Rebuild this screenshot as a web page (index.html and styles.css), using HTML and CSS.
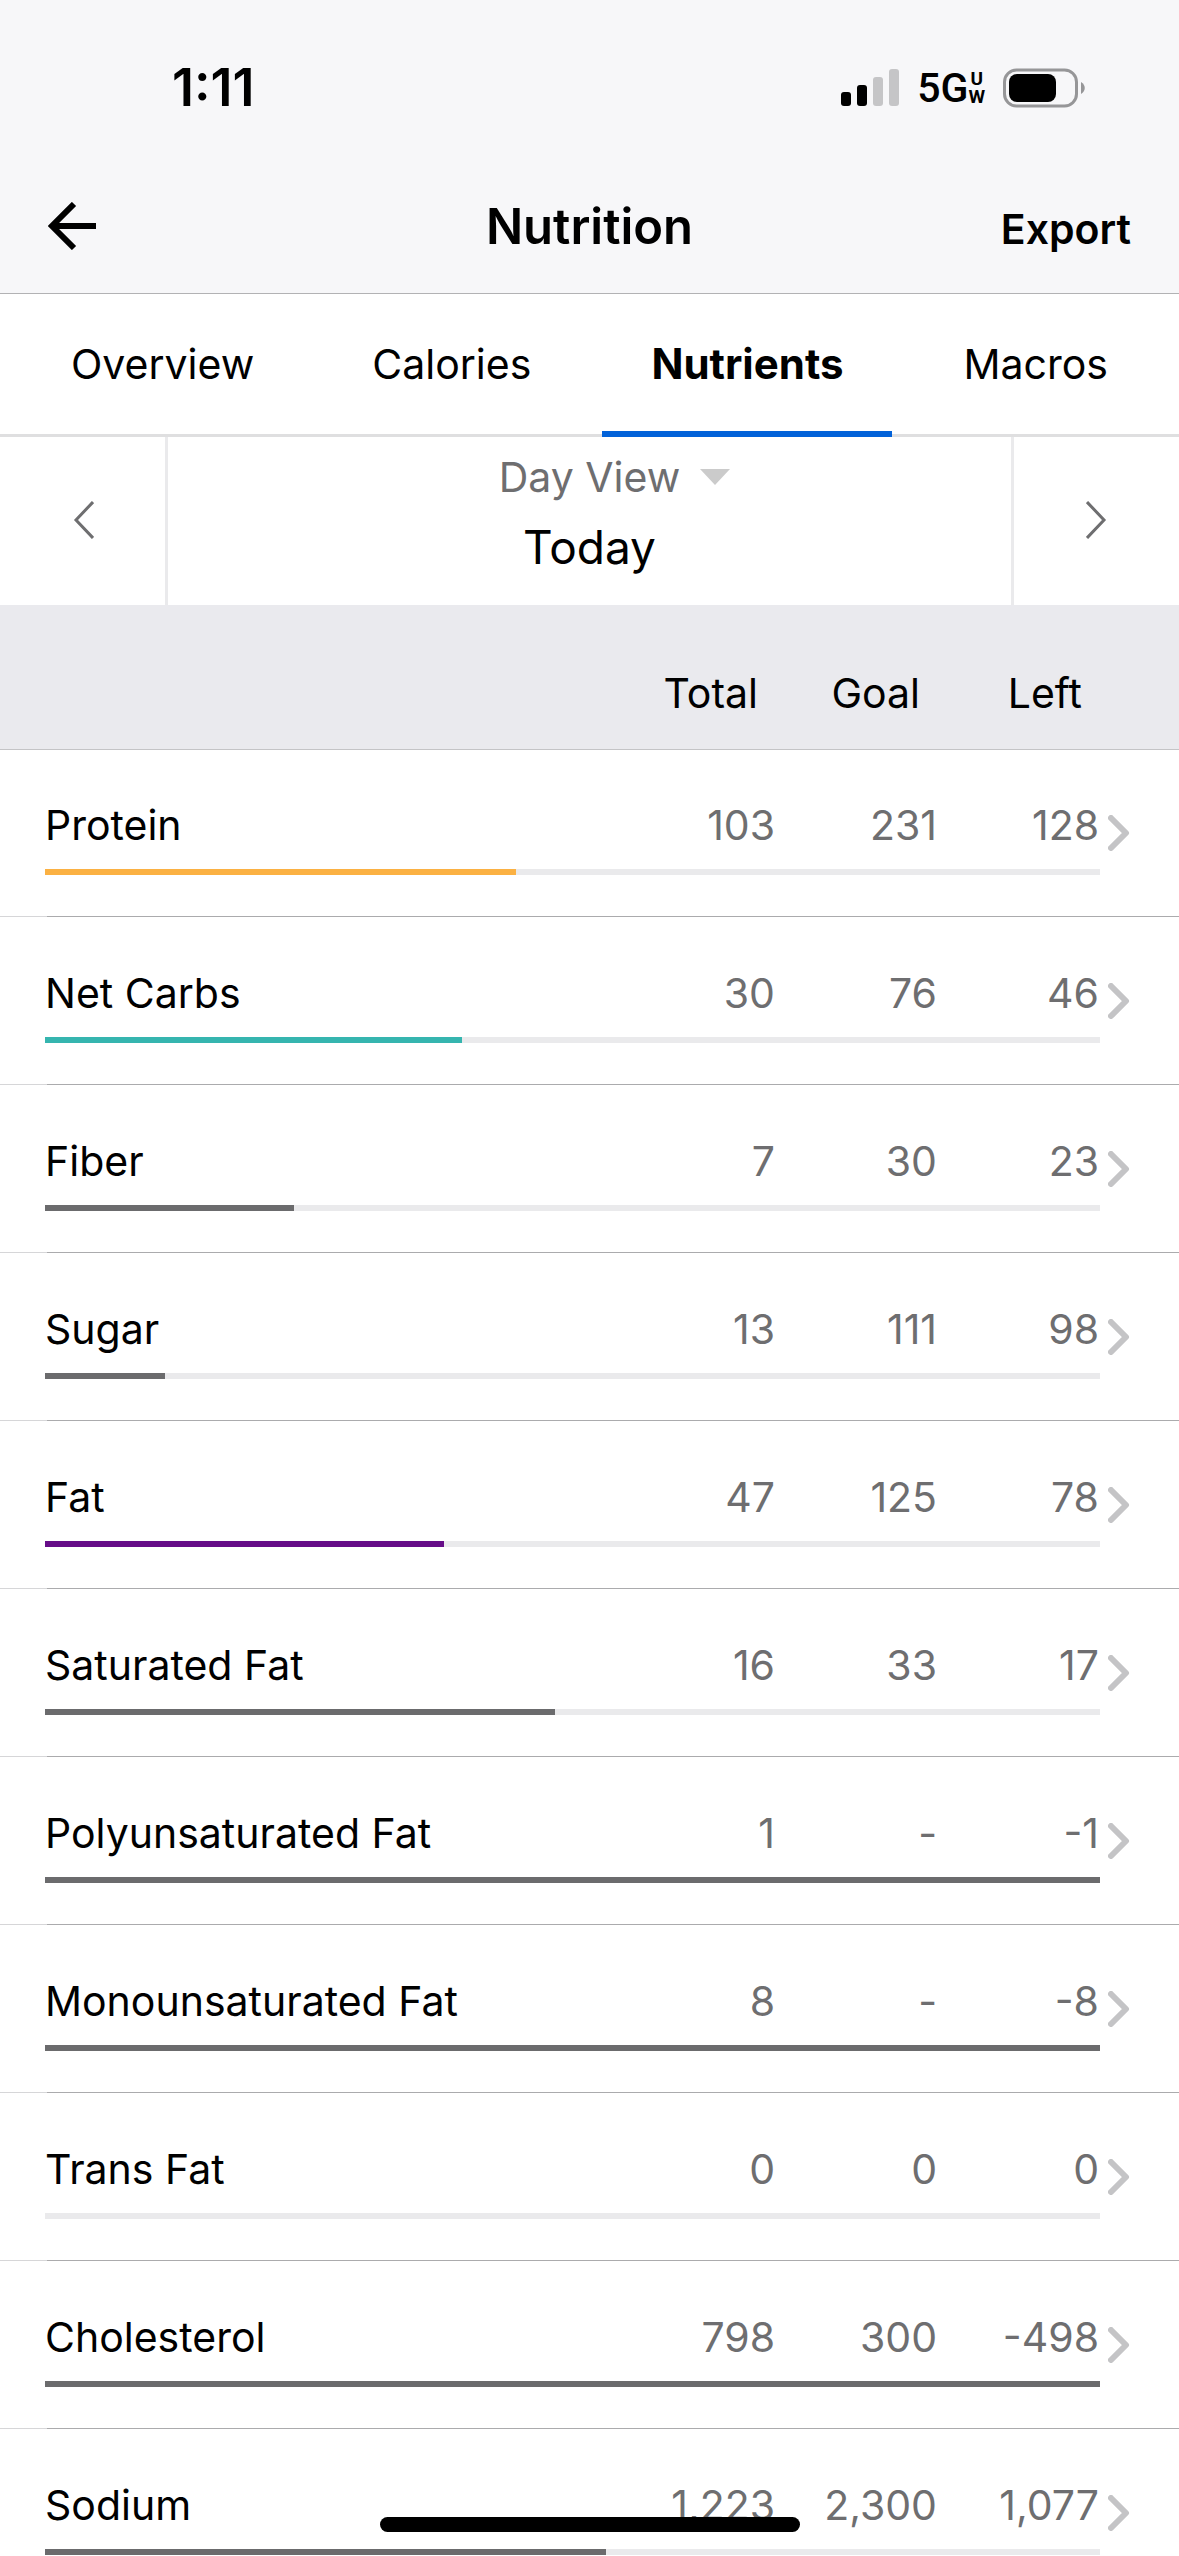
FILE: index.html
```html
<!DOCTYPE html>
<html lang="en">
<head>
    <meta charset="UTF-8">
    <meta name="viewport" content="width=device-width, initial-scale=1.0">
    <title>Nutrition</title>
    <link rel="stylesheet" href="styles.css">
</head>
<body>
    <div class="app">
        <div class="status-bar">
            <span class="time">1:11</span>
            <div class="status-icons">
                <svg class="signal" width="58" height="38" viewBox="0 0 58 38">
                    <rect x="0" y="23" width="10" height="14" rx="3"/>
                    <rect x="16" y="16" width="10" height="21" rx="3"/>
                    <rect x="32" y="8" width="10" height="29" rx="3" fill="#c5c5c7"/>
                    <rect x="48" y="0" width="10" height="37" rx="3" fill="#c5c5c7"/>
                </svg>
                <span class="network">5G<span class="network-uw"><span>U</span><span>W</span></span></span>
                <svg class="battery" width="82" height="40" viewBox="0 0 82 40">
                    <rect x="1.5" y="2" width="72" height="36" rx="12" fill="none" stroke="#969698" stroke-width="3"/>
                    <rect x="6" y="6" width="47" height="28" rx="8"/>
                    <path d="M78 14 C83 17 83 23 78 26 Z" fill="#969698"/>
                </svg>
            </div>
        </div>

        <header class="nav-bar">
            <button class="back" type="button" aria-label="Back">
                <svg width="48" height="48" viewBox="0 0 48 48" fill="none" stroke="#000" stroke-width="6">
                    <path d="M48 24 H5"/>
                    <path d="M26 2 L4 24 L26 46"/>
                </svg>
            </button>
            <h1>Nutrition</h1>
            <button class="export" type="button">Export</button>
        </header>

        <nav class="tabs">
            <a href="#overview">Overview</a>
            <a href="#calories">Calories</a>
            <a class="active" href="#nutrients">Nutrients</a>
            <a href="#macros">Macros</a>
        </nav>

        <div class="date-bar">
            <button class="prev" type="button" aria-label="Previous day">
                <svg width="22" height="38" viewBox="0 0 22 38" fill="none" stroke="#6e6e70" stroke-width="3">
                    <path d="M21 1 L4 19 L21 37"/>
                </svg>
            </button>
            <div class="date">
                <button class="view" type="button">Day View
                    <svg width="30" height="16" viewBox="0 0 30 16"><path d="M0 0 H30 L15 16 Z" fill="#cbcbcb"/></svg>
                </button>
                <span class="today">Today</span>
            </div>
            <button class="next" type="button" aria-label="Next day">
                <svg width="22" height="38" viewBox="0 0 22 38" fill="none" stroke="#6e6e70" stroke-width="3">
                    <path d="M1 1 L18 19 L1 37"/>
                </svg>
            </button>
        </div>

        <table class="nutrients">
            <thead>
                <tr><th></th><th>Total</th><th>Goal</th><th>Left</th></tr>
            </thead>
            <tbody></tbody>
        </table>

        <div class="home-indicator"></div>
    </div>
    <script src="script.js"></script>
</body>
</html>
```
FILE: styles.css
```css
* {
    box-sizing: border-box;
}
body {
    margin: 0;
    background-color: #fff;
    color: #000;
    font-family: Inter, "Liberation Sans", sans-serif;
    font-size: 41px;
    line-height: 50px;
}
button {
    padding: 0;
    border: 0;
    background: none;
    color: inherit;
    font: inherit;
}
svg {
    display: block;
    flex: none;
}
.app {
    height: 100vh;
    overflow: hidden;
}

/* status bar */
.status-bar {
    display: flex;
    justify-content: space-between;
    align-items: center;
    height: 176px;
    padding: 0 94px 0 172px;
    background-color: #f7f7f9;
}
.time {
    font-size: 52px;
    font-weight: 600;
}
.status-icons {
    display: flex;
    align-items: center;
    gap: 18px;
}
.network {
    display: flex;
    align-items: center;
    font-family: Roboto, sans-serif;
    font-size: 41px;
    font-weight: 500;
}
.network-uw {
    display: flex;
    flex-direction: column;
    align-items: center;
    font-size: 19px;
    font-weight: 700;
    line-height: 18px;
}

/* title */
.nav-bar {
    display: grid;
    grid-template-columns: 1fr auto 1fr;
    align-items: baseline;
    height: 118px;
    padding: 26px 48px 0;
    background-color: #f7f7f9;
    border-bottom: 1px solid #b2b2b4;
}
.back {
    align-self: start;
    justify-self: start;
}
h1 {
    margin: 0;
    font-size: 49px;
    font-weight: 600;
}
.export {
    justify-self: end;
    font-weight: 600;
}

/* tabs */
.tabs {
    display: flex;
    justify-content: space-between;
    height: 143px;
    padding: 0 24px;
    box-shadow: inset 0 -3px #dfdfe0;
}
.tabs a {
    padding: 45px 47px 0;
    color: #000;
    text-decoration: none;
}
.tabs .active {
    font-size: 42px;
    font-weight: 700;
    padding: 45px 49px 0;
    border-bottom: 6px solid #0262d9;
}

/* day picker */
.date-bar {
    display: flex;
    height: 168px;
}
.prev, .next {
    display: flex;
    align-items: center;
    justify-content: center;
    width: 168px;
    padding-bottom: 2px;
}
.prev {
    border-right: 3px solid #eaeaec;
}
.next {
    border-left: 3px solid #eaeaec;
}
.date {
    display: flex;
    flex: 1;
    flex-direction: column;
    align-items: center;
    padding-top: 15px;
    gap: 20px;
}
.view {
    display: flex;
    align-items: center;
    gap: 20px;
    padding-left: 50px;
    color: #6e6e70;
}
.today {
    font-size: 46px;
}

/* table */
.nutrients, .nutrients thead, .nutrients tbody {
    display: block;
}
.nutrients th, .nutrients td {
    padding: 0;
    font-weight: 400;
}
.nutrients tr {
    display: grid;
    grid-template-columns: 1fr 162px 162px 162px;
    text-align: right;
}
.nutrients thead tr {
    height: 144px;
    padding: 63px 97px 0 45px;
    background-color: #eaeaee;
}
.nutrients tbody {
    border-top: 1px solid #c4c4c6;
}
.nutrients tbody tr {
    grid-template-columns: 1fr 162px 162px 162px 30px;
    grid-template-rows: 50px 6px;
    row-gap: 19px;
    height: 168px;
    padding: 51px 49px 0 45px;
    border-bottom: 1px solid #ababad;
    border-image: linear-gradient(to right, #d6d6d8 48px, #ababad 48px) 1;
}
.nutrients tbody tr:first-child {
    height: 167px;
    padding-top: 50px;
}
.nutrients tbody th {
    text-align: left;
    white-space: nowrap;
}
.nutrients td {
    padding-right: 1px;
    color: #6e6e70;
}
.nutrients .chevron {
    grid-column: 5;
    grid-row: 1;
    padding: 15px 0 0 8px;
}
.nutrients .bar {
    grid-column: 1 / 5;
    grid-row: 2;
    padding: 0;
    background-color: #eaeaec;
}
.fill {
    height: 6px;
    background-color: #6b6b6d;
}
.fill.orange {
    background-color: #fbb143;
}
.fill.teal {
    background-color: #35b5af;
}
.fill.purple {
    background-color: #660d88;
}

.home-indicator {
    position: fixed;
    bottom: 24px;
    left: 50%;
    width: 420px;
    height: 15px;
    margin-left: -210px;
    border-radius: 8px;
    background-color: #000;
}
```
FILE: script.js
```js
// name, total, goal, left, percent filled, bar colour
const nutrients = [
    ['Protein', '103', '231', '128', 44.6, 'orange'],
    ['Net Carbs', '30', '76', '46', 39.5, 'teal'],
    ['Fiber', '7', '30', '23', 23.6, ''],
    ['Sugar', '13', '111', '98', 11.4, ''],
    ['Fat', '47', '125', '78', 37.8, 'purple'],
    ['Saturated Fat', '16', '33', '17', 48.3, ''],
    ['Polyunsaturated Fat', '1', '-', '-1', 100, ''],
    ['Monounsaturated Fat', '8', '-', '-8', 100, ''],
    ['Trans Fat', '0', '0', '0', 0, ''],
    ['Cholesterol', '798', '300', '-498', 100, ''],
    ['Sodium', '1,223', '2,300', '1,077', 53.2, '']
];

const tbody = document.querySelector('.nutrients tbody');

nutrients.forEach(([name, total, goal, left, percent, color]) => {
    tbody.insertAdjacentHTML('beforeend', `
        <tr>
            <th scope="row">${name}</th>
            <td>${total}</td>
            <td>${goal}</td>
            <td>${left}</td>
            <td class="chevron">
                <svg width="22" height="36" viewBox="0 0 22 36" fill="none" stroke="#c4c4c6" stroke-width="6" stroke-linecap="round" stroke-linejoin="round">
                    <path d="M3 3 L18 18 L3 33"/>
                </svg>
            </td>
            <td class="bar"><div class="fill ${color}" style="width: ${percent}%"></div></td>
        </tr>`);
});
```
